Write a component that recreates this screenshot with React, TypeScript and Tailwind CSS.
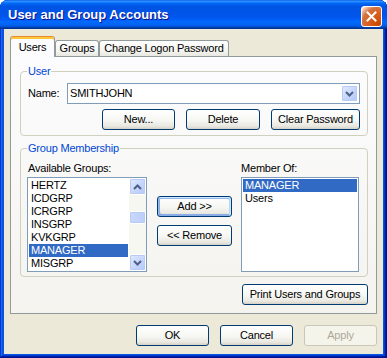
import React from "react";

const chevron = (up: boolean) => (
  <svg width="9" height="6" viewBox="0 0 9 6">
    <path d={up ? "M1 5 L4.5 1.5 L8 5" : "M1 1 L4.5 4.5 L8 1"} fill="none" stroke="#4D6185" strokeWidth="2" />
  </svg>
);

function Btn({ children, className = "", def = false, disabled = false }: { children: React.ReactNode; className?: string; def?: boolean; disabled?: boolean }) {
  if (disabled) {
    return (
      <div className={`h-[21px] rounded-[3px] border border-[#C9C7BA] bg-[#F5F4EA] text-[#ACA899] flex items-center justify-center ${className}`}>
        {children}
      </div>
    );
  }
  return (
    <div
      className={`h-[21px] rounded-[3px] border border-[#003C74] bg-[linear-gradient(180deg,#FFFFFF_0%,#F6F6F2_55%,#E9E8E1_85%,#D6D0C5_100%)] text-black flex items-center justify-center ${
        def ? "shadow-[inset_-1px_1px_#CEE7FF,inset_1px_2px_#98B8EA,inset_-2px_2px_#BCD4F6,inset_1px_-1px_#89ADE4,inset_2px_-2px_#89ADE4]" : ""
      } ${className}`}
    >
      {children}
    </div>
  );
}

const arrowBox =
  "w-[17px] h-[17px] rounded-[2px] border border-[#FFFFFF] bg-[linear-gradient(135deg,#E2EBFE_0%,#C3D4FC_60%,#B4C8F6_100%)] shadow-[inset_0_0_0_1px_#BACBF3] flex items-center justify-center";

function Row({ label, selected = false }: { label: string; selected?: boolean }) {
  return (
    <div className={`h-[13px] leading-[13px] pl-[2px] whitespace-nowrap ${selected ? "bg-[#316AC5] text-white" : "text-black"}`}>{label}</div>
  );
}

export default function App() {
  const groups = ["HERTZ", "ICDGRP", "ICRGRP", "INSGRP", "KVKGRP", "MANAGER", "MISGRP"];

  return (
    <div className="w-[387px] h-[358px] bg-white font-['Liberation_Sans',Arial,sans-serif] text-[11px] tracking-[-0.2px] text-black">
      <div className="w-[387px] h-[358px] rounded-t-[8px] overflow-hidden flex flex-col bg-[#0855DD] shadow-[inset_-1px_-1px_#00138C,inset_1px_1px_#0831D9,inset_-2px_-2px_#001EA0,inset_2px_2px_#166AEE,inset_-3px_-3px_#003BDA,inset_3px_3px_#0855DD]">
        {/* title bar */}
        <div className="h-[29px] shrink-0 flex items-center justify-between pl-[8px] pr-[5px] bg-[linear-gradient(180deg,#0058EE_0%,#3593FF_4%,#288EFF_6%,#127DFF_8%,#036FFC_10%,#0262EE_14%,#0057E5_20%,#0054E3_24%,#0055EB_56%,#005BF5_66%,#026AFE_76%,#0062EF_86%,#0052D6_92%,#0040AB_94%,#003092_100%)]">
          <span className="text-white font-bold text-[13px] tracking-normal pt-[1px] [text-shadow:1px_1px_#0F1089]">User and Group Accounts</span>
          <div className="w-[21px] h-[21px] mt-[3px] rounded-[3px] border border-white bg-[radial-gradient(circle_at_90%_90%,#CC4600_0%,#DC6527_55%,#CD7546_70%,#FFCCB2_90%,#FFFFFF_100%)] flex items-center justify-center">
            <svg width="11" height="11" viewBox="0 0 11 11">
              <path d="M1.5 1.5 L9.5 9.5 M9.5 1.5 L1.5 9.5" stroke="white" strokeWidth="2" strokeLinecap="square" />
            </svg>
          </div>
        </div>

        {/* body */}
        <div className="mx-[4px] mb-[4px] flex-1 bg-[#ECE9D8] flex flex-col px-[6px] pt-[7px]">
          {/* tabs */}
          <div className="flex items-end h-[20px]">
            <div className="relative z-10 w-[45px] h-[21px] -mb-px rounded-t-[3px] border border-b-0 border-[#919B9C] border-t-[#E68B2C] shadow-[inset_0_2px_#FFC83C] bg-[#FCFCFE] flex items-center justify-center pt-[1px]">
              Users
            </div>
            <div className="w-[44px] h-[16px] rounded-t-[3px] border border-b-0 border-[#919B9C] bg-[linear-gradient(180deg,#FFFFFF_0%,#F3F3EF_70%,#E8E7E0_100%)] flex items-center justify-center">
              Groups
            </div>
            <div className="w-[130px] h-[16px] rounded-t-[3px] border border-b-0 border-[#919B9C] bg-[linear-gradient(180deg,#FFFFFF_0%,#F3F3EF_70%,#E8E7E0_100%)] flex items-center justify-center">
              Change Logon Password
            </div>
          </div>

          {/* panel */}
          <div className="w-[367px] h-[258px] border border-[#919B9C] bg-[linear-gradient(180deg,#FCFCFE_0%,#F4F3EE_100%)] pl-[9px] pr-[8px] pt-[8px] flex flex-col">
            <fieldset className="w-[348px] border border-[#D0D0BF] rounded-[4px] pl-[6px] pr-[7px] pt-[5px] pb-[5px]">
              <legend className="px-[1px] leading-[13px] text-[#0046D5]">User</legend>
              <div className="flex items-center">
                <span className="w-[40px] pl-[1px]">Name:</span>
                <div className="flex-1 h-[21px] border border-[#7F9DB9] bg-white flex items-center justify-between pl-[2px] pr-[1px]">
                  <span>SMITHJOHN</span>
                  <div className={arrowBox}>{chevron(false)}</div>
                </div>
              </div>
              <div className="flex justify-end gap-[11px] mt-[5px]">
                <Btn className="w-[73px]">New...</Btn>
                <Btn className="w-[74px]">Delete</Btn>
                <Btn className="w-[89px]">Clear Password</Btn>
              </div>
            </fieldset>

            <fieldset className="w-[348px] mt-[6px] border border-[#D0D0BF] rounded-[4px] pl-[6px] pr-[7px] pt-[7px] pb-[4px]">
              <legend className="px-[1px] leading-[13px] text-[#0046D5]">Group Membership</legend>
              <div className="flex">
                <div className="w-[120px] flex flex-col">
                  <span className="leading-[13px] pl-[1px]">Available Groups:</span>
                  <div className="mt-[2px] h-[95px] border border-[#7F9DB9] bg-white flex">
                    <div className="flex-1 p-[1px] overflow-hidden">
                      {groups.map((g) => (
                        <Row key={g} label={g} selected={g === "MANAGER"} />
                      ))}
                    </div>
                    <div className="w-[17px] flex flex-col bg-[#F7F7F2]">
                      <div className={arrowBox}>{chevron(true)}</div>
                      <div className="flex-1">
                        <div className="mt-[16px] h-[13px] w-[17px] rounded-[2px] border border-white bg-[linear-gradient(90deg,#C9D8FC_0%,#BCCEFA_100%)] shadow-[inset_0_0_0_1px_#BACBF3]" />
                      </div>
                      <div className={arrowBox}>{chevron(false)}</div>
                    </div>
                  </div>
                </div>

                <div className="w-[75px] ml-[10px] flex flex-col pt-[34px] gap-[8px]">
                  <Btn className="w-[75px]" def>
                    {"Add >>"}
                  </Btn>
                  <Btn className="w-[75px]">{"<< Remove"}</Btn>
                </div>

                <div className="w-[118px] ml-[9px] flex flex-col">
                  <span className="leading-[13px]">Member Of:</span>
                  <div className="mt-[2px] h-[95px] border border-[#7F9DB9] bg-white p-[1px]">
                    <Row label="MANAGER" selected />
                    <Row label="Users" />
                  </div>
                </div>
              </div>
            </fieldset>

            <div className="flex justify-end w-[348px] mt-[7px]">
              <Btn className="w-[126px]">Print Users and Groups</Btn>
            </div>
          </div>

          {/* dialog buttons */}
          <div className="flex justify-end gap-[11px] mt-[11px]">
            <Btn className="w-[73px]">OK</Btn>
            <Btn className="w-[73px]">Cancel</Btn>
            <Btn className="w-[73px]" disabled>
              Apply
            </Btn>
          </div>
        </div>
      </div>
    </div>
  );
}
